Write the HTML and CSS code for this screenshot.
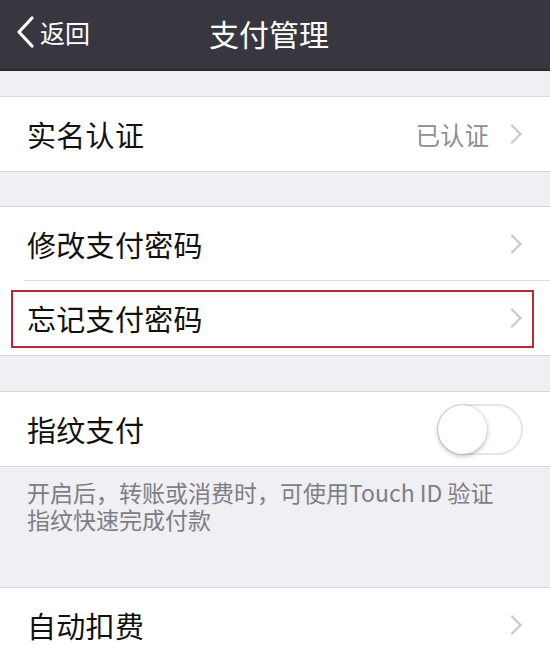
FILE: index.html
```html
<!DOCTYPE html>
<html>
<head>
<meta charset="utf-8">
<link rel="stylesheet" href="styles.css">
</head>
<body>
<div class="nav">
  <div class="back">
    <svg class="back-icon" width="22" height="34" viewBox="0 0 22 34"><path d="M17 3 L4 17 L17 31" fill="none" stroke="#fff" stroke-width="3.2" stroke-linecap="round" stroke-linejoin="round"/></svg>
    <span>返回</span>
  </div>
  <div class="title">支付管理</div>
</div>

<div class="spacer s1"></div>
<div class="group">
  <div class="row"><span class="label">实名认证</span><span class="detail">已认证</span><span class="chev"></span></div>
</div>

<div class="spacer s2"></div>
<div class="group">
  <div class="row sep"><span class="label">修改支付密码</span><span class="chev"></span></div>
  <div class="row highlight"><span class="label">忘记支付密码</span><span class="chev"></span></div>
</div>

<div class="spacer s3"></div>
<div class="group">
  <div class="row"><span class="label">指纹支付</span><span class="switch"><span class="knob"></span></span></div>
</div>
<div class="footer"><div class="fline">开启后，转账或消费时，可使用Touch ID 验证</div><div class="fline">指纹快速完成付款</div></div>

<div class="group">
  <div class="row"><span class="label">自动扣费</span><span class="chev"></span></div>
</div>
</body>
</html>
```
FILE: styles.css
```css
html, body {
  margin: 0;
  padding: 0;
  background: #efeff4;
  font-family: "Noto Sans CJK SC", "Noto Sans", sans-serif;
  overflow: hidden;
}
.nav {
  height: 69px;
  background: #38373f;
  border-bottom: 2px solid #2a2a30;
  display: flex;
  align-items: center;
  color: #fff;
  position: relative;
}
.back {
  display: flex;
  align-items: center;
  padding-left: 15px;
  font-size: 25px;
  gap: 3px;
  margin-top: -5px;
}
.title {
  position: absolute;
  left: 0;
  right: 0;
  top: 13px;
  line-height: 40px;
  text-align: center;
  font-size: 30px;
  pointer-events: none;
  padding-right: 12px;
}
.s1 { height: 25px; }
.s2 { height: 34px; }
.s3 { height: 35px; }
.group {
  background: #fff;
  border-top: 1px solid #d8d8dc;
  border-bottom: 1px solid #d8d8dc;
}
.row {
  height: 74px;
  display: flex;
  align-items: center;
  padding-left: 27px;
  padding-right: 28px;
  position: relative;
  box-sizing: border-box;
}
.row.sep::after {
  content: "";
  position: absolute;
  left: 24px;
  right: 0;
  bottom: 0;
  height: 1px;
  background: #dcdce0;
}
.row.highlight::before {
  content: "";
  position: absolute;
  left: 11px;
  right: 16px;
  top: 9px;
  bottom: 7px;
  border: 2px solid #b3283c;
}
.label {
  flex: 1;
  font-size: 29px;
  color: #111;
  letter-spacing: 0.3px;
}
.detail {
  font-size: 24.5px;
  color: #8e8e93;
  margin-right: 16px;
}
.chev {
  width: 12px;
  height: 12px;
  border-top: 2px solid #c7c7cc;
  border-right: 2px solid #c7c7cc;
  transform: rotate(45deg);
  margin-right: 3px;
}
.switch {
  width: 86px;
  height: 51px;
  border-radius: 26px;
  border: 2px solid #e5e5ea;
  box-sizing: border-box;
  position: relative;
  background: #fff;
  margin-right: -1px;
}
.knob {
  position: absolute;
  left: -1px;
  top: -1px;
  width: 49px;
  height: 49px;
  border-radius: 50%;
  background: #fff;
  box-shadow: 0 2px 5px rgba(0,0,0,0.25), 0 0 1px rgba(0,0,0,0.3);
}
.footer {
  padding: 12px 20px 0 27px;
  height: 120px;
  box-sizing: border-box;
  font-size: 23px;
  color: #7e7e84;
  display: flex;
  flex-direction: column;
  gap: 1px;
}
.fline {
  line-height: 26px;
  white-space: nowrap;
}
```
